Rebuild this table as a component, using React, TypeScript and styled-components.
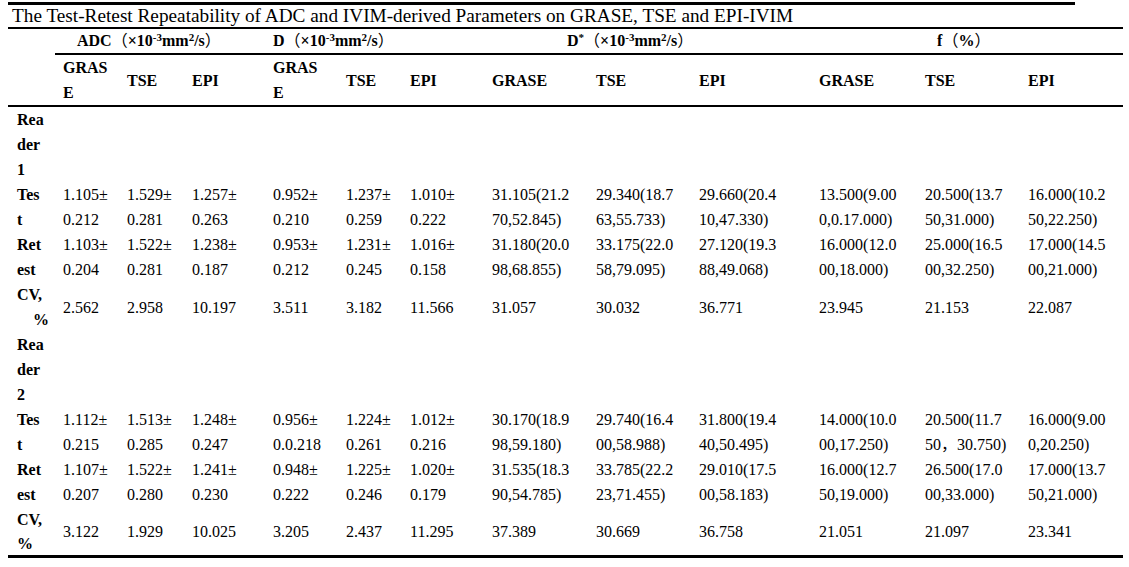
import * as React from 'react';
import styled, { createGlobalStyle } from 'styled-components';

const serif = `"Liberation Serif", "Times New Roman", "Noto Sans CJK SC", serif`;

const GlobalStyle = createGlobalStyle`
  html, body {
    margin: 0;
    padding: 0;
    background: #ffffff;
  }
  body {
    font-family: ${serif};
    color: #000000;
  }
`;

// Styles
const Page = styled.div`
  width: 1115px;
  padding: 2px 6px 0 8px;
`;

const TopRule = styled.div`
  width: 1067px;
  height: 3px;
  background: #000;
`;

const Caption = styled.div`
  height: 22px;
  line-height: 22px;
  padding-left: 4px;
  font-family: ${serif};
  font-size: 19.25px;
  white-space: nowrap;
  border-bottom: 2px solid #000;
`;

const Table = styled.table`
  width: 1115px;
  border-collapse: collapse;
  table-layout: fixed;
  font-family: ${serif};
  font-size: 16px;
  color: #000;
  border-bottom: 3px solid #000;
`;

const Col = styled.col<{ $w: number }>`
  width: ${p => p.$w}px;
`;

const GroupCell = styled.th<{ $indent: number }>`
  height: 24px;
  padding: 0 0 0 ${p => p.$indent}px;
  text-align: left;
  font-weight: bold;
  line-height: 24px;
  white-space: nowrap;
  border-bottom: 2px solid #000;
`;

const SubCell = styled.th`
  height: 46px;
  padding: 0 0 0 8px;
  text-align: left;
  font-weight: bold;
  line-height: 25px;
  vertical-align: middle;
  border-bottom: 2px solid #000;
`;

const CornerCell = styled.th`
  border-bottom: 2px solid #000;
`;

const LabelCell = styled.th`
  padding: 0 6px 0 9px;
  text-align: left;
  font-weight: bold;
  line-height: 25px;
  vertical-align: top;
`;

const LabelLine = styled.span<{ $right?: boolean }>`
  display: block;
  height: 25px;
  text-align: ${p => (p.$right ? 'right' : 'left')};
`;

const LastLabelLine = styled(LabelLine)`
  height: 23px;
  line-height: 23px;
`;

const ValueCell = styled.td`
  padding: 0 0 0 8px;
  line-height: 25px;
  white-space: nowrap;
  vertical-align: middle;
`;

const Sup = styled.sup`
  font-size: 11px;
  line-height: 0;
  vertical-align: 5px;
`;

const Wide = styled.span`
  font-family: "Noto Sans CJK SC", sans-serif;
  font-weight: normal;
  font-size: 16px;
  line-height: 0;
`;

const widths = [47, 64, 65, 81, 73, 64, 82, 104, 103, 120, 106, 103, 103];

const subHeads: string[][] = [
  ['GRAS', 'E'], ['TSE'], ['EPI'],
  ['GRAS', 'E'], ['TSE'], ['EPI'],
  ['GRASE'], ['TSE'], ['EPI'],
  ['GRASE'], ['TSE'], ['EPI'],
];

type Row = { label: string[]; lastRight?: boolean; last?: boolean; values: string[][] };

const reader1: Row[] = [
  { label: ['Rea', 'der', '1'], values: [] },
  {
    label: ['Tes', 't'],
    values: [
      ['1.105±', '0.212'], ['1.529±', '0.281'], ['1.257±', '0.263'],
      ['0.952±', '0.210'], ['1.237±', '0.259'], ['1.010±', '0.222'],
      ['31.105(21.2', '70,52.845)'], ['29.340(18.7', '63,55.733)'], ['29.660(20.4', '10,47.330)'],
      ['13.500(9.00', '0,0.17.000)'], ['20.500(13.7', '50,31.000)'], ['16.000(10.2', '50,22.250)'],
    ],
  },
  {
    label: ['Ret', 'est'],
    values: [
      ['1.103±', '0.204'], ['1.522±', '0.281'], ['1.238±', '0.187'],
      ['0.953±', '0.212'], ['1.231±', '0.245'], ['1.016±', '0.158'],
      ['31.180(20.0', '98,68.855)'], ['33.175(22.0', '58,79.095)'], ['27.120(19.3', '88,49.068)'],
      ['16.000(12.0', '00,18.000)'], ['25.000(16.5', '00,32.250)'], ['17.000(14.5', '00,21.000)'],
    ],
  },
  {
    label: ['CV,', '%'],
    lastRight: true,
    values: [
      ['2.562'], ['2.958'], ['10.197'], ['3.511'], ['3.182'], ['11.566'],
      ['31.057'], ['30.032'], ['36.771'], ['23.945'], ['21.153'], ['22.087'],
    ],
  },
];

const reader2: Row[] = [
  { label: ['Rea', 'der', '2'], values: [] },
  {
    label: ['Tes', 't'],
    values: [
      ['1.112±', '0.215'], ['1.513±', '0.285'], ['1.248±', '0.247'],
      ['0.956±', '0.0.218'], ['1.224±', '0.261'], ['1.012±', '0.216'],
      ['30.170(18.9', '98,59.180)'], ['29.740(16.4', '00,58.988)'], ['31.800(19.4', '40,50.495)'],
      ['14.000(10.0', '00,17.250)'], ['20.500(11.7', '50，30.750)'], ['16.000(9.00', '0,20.250)'],
    ],
  },
  {
    label: ['Ret', 'est'],
    values: [
      ['1.107±', '0.207'], ['1.522±', '0.280'], ['1.241±', '0.230'],
      ['0.948±', '0.222'], ['1.225±', '0.246'], ['1.020±', '0.179'],
      ['31.535(18.3', '90,54.785)'], ['33.785(22.2', '23,71.455)'], ['29.010(17.5', '00,58.183)'],
      ['16.000(12.7', '50,19.000)'], ['26.500(17.0', '00,33.000)'], ['17.000(13.7', '50,21.000)'],
    ],
  },
  {
    label: ['CV,', '%'],
    last: true,
    values: [
      ['3.122'], ['1.929'], ['10.025'], ['3.205'], ['2.437'], ['11.295'],
      ['37.389'], ['30.669'], ['36.758'], ['21.051'], ['21.097'], ['23.341'],
    ],
  },
];

const Text = ({ value }: { value: string }) =>
  value.includes('，') ? (
    <>
      {value.split('，')[0]}
      <Wide>，</Wide>
      {value.split('，')[1]}
    </>
  ) : (
    <>{value}</>
  );

const Lines = ({ lines }: { lines: string[] }) => (
  <>
    {lines.map((l, i) => (
      <React.Fragment key={i}>
        {i > 0 && <br />}
        <Text value={l} />
      </React.Fragment>
    ))}
  </>
);

const Unit = () => (
  <>
    <Wide>（</Wide>×10<Sup>-3</Sup>mm<Sup>2</Sup>/s<Wide>）</Wide>
  </>
);

const BodyRows = ({ rows }: { rows: Row[] }) => (
  <>
    {rows.map((r, i) => (
      <tr key={i}>
        <LabelCell>
          {r.label.map((l, k) => {
            const isLast = k === r.label.length - 1;
            const Line = r.last && isLast ? LastLabelLine : LabelLine;
            return <Line key={k} $right={r.lastRight && isLast}>{l}</Line>;
          })}
        </LabelCell>
        {widths.slice(1).map((_, j) => (
          <ValueCell key={j}>{r.values[j] ? <Lines lines={r.values[j]} /> : null}</ValueCell>
        ))}
      </tr>
    ))}
  </>
);

export default function App() {
  return (
    <>
      <GlobalStyle />
      <Page>
        <TopRule />
        <Caption>
          The Test-Retest Repeatability of ADC and IVIM-derived Parameters on GRASE, TSE and EPI-IVIM
        </Caption>
        <Table>
          <colgroup>
            {widths.map((w, i) => <Col key={i} $w={w} />)}
          </colgroup>
          <thead>
            <tr>
              <CornerCell rowSpan={2} />
              <GroupCell colSpan={3} $indent={22}>ADC<Unit /></GroupCell>
              <GroupCell colSpan={3} $indent={8}>D<Unit /></GroupCell>
              <GroupCell colSpan={3} $indent={83}>D<Sup>*</Sup><Unit /></GroupCell>
              <GroupCell colSpan={3} $indent={126}>f<Wide>（</Wide>%<Wide>）</Wide></GroupCell>
            </tr>
            <tr>
              {subHeads.map((h, i) => (
                <SubCell key={i}><Lines lines={h} /></SubCell>
              ))}
            </tr>
          </thead>
          <tbody>
            <BodyRows rows={reader1} />
            <BodyRows rows={reader2} />
          </tbody>
        </Table>
      </Page>
    </>
  );
}
